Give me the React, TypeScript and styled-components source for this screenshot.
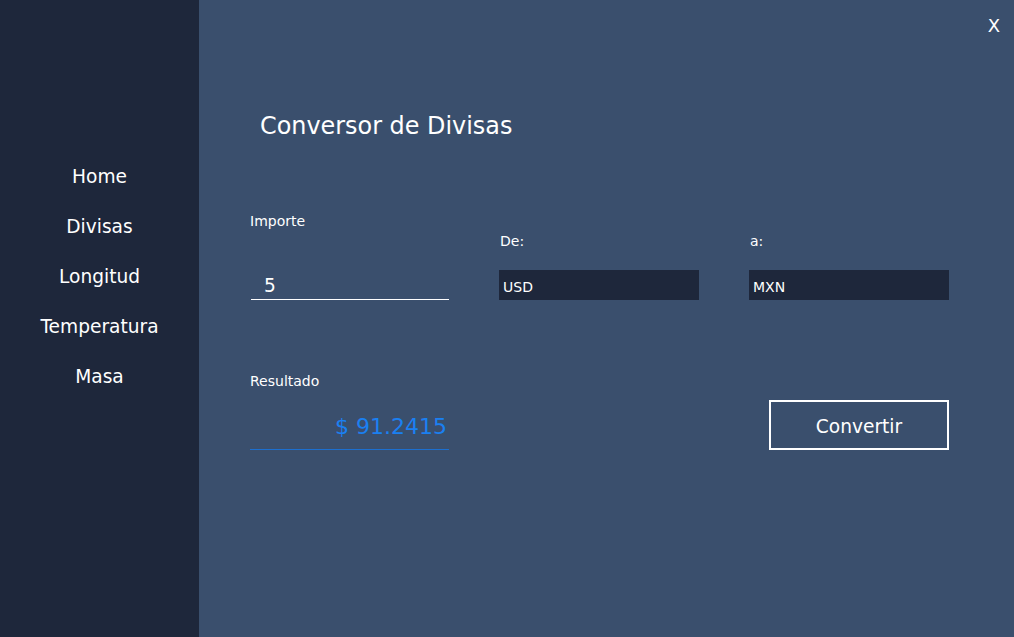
import React from "react";
import styled, { createGlobalStyle } from "styled-components";

const Global = createGlobalStyle`
  html, body { margin: 0; padding: 0; }
  body { font-family: "DejaVu Sans", Verdana, sans-serif; background: #3a4f6d; }
  * { box-sizing: border-box; }
`;

const Shell = styled.div`
  display: flex;
  width: 1014px;
  height: 637px;
  overflow: hidden;
`;

const Sidebar = styled.nav`
  width: 199px;
  flex: none;
  background: #1e273b;
  display: flex;
  flex-direction: column;
  align-items: center;
  padding-top: 164px;
  gap: 24px;
`;

const NavItem = styled.a`
  color: #ffffff;
  font-size: 18.6px;
  line-height: 26px;
  text-decoration: none;
  cursor: pointer;
`;

const Main = styled.main`
  flex: 1;
  background: #3a4f6d;
  display: flex;
  flex-direction: column;
  padding-left: 50px;
`;

const TopBar = styled.div`
  display: flex;
  justify-content: flex-end;
  padding: 15px 14px 0 0;
`;

const Close = styled.button`
  background: none;
  border: none;
  padding: 0;
  color: #ffffff;
  font-family: inherit;
  font-size: 18px;
  line-height: 22px;
  cursor: pointer;
`;

const Title = styled.h1`
  margin: 75px 0 0 11px;
  font-weight: normal;
  font-size: 23.9px;
  line-height: 28px;
  color: #ffffff;
`;

const FormGrid = styled.div`
  display: grid;
  grid-template-columns: 200px 200px 200px;
  column-gap: 50px;
  align-items: end;
  margin-top: 73px;
`;

const Field = styled.div<{ $gap: number }>`
  display: flex;
  flex-direction: column;
  gap: ${(p) => p.$gap}px;
`;

const Label = styled.label`
  color: #ffffff;
  font-size: 14px;
  line-height: 17px;
  padding-left: 1px;
`;

const AmountInput = styled.input`
  margin-left: 2px;
  width: 198px;
  height: 34px;
  background: transparent;
  border: none;
  border-bottom: 1px solid #ffffff;
  color: #ffffff;
  font-family: inherit;
  font-size: 18.6px;
  padding: 5px 0 0 13px;
  outline: none;
`;

const Select = styled.div`
  height: 30px;
  background: #1e273b;
  color: #ffffff;
  font-size: 14px;
  display: flex;
  align-items: center;
  padding: 4px 0 0 4px;
`;

const ResultGrid = styled.div`
  display: grid;
  grid-template-columns: 200px 200px 200px;
  column-gap: 50px;
  align-items: end;
  margin-top: 73px;
`;

const ResultValue = styled.div`
  margin-left: 1px;
  border-bottom: 1px solid #1c6fcf;
  color: #1a80f2;
  font-size: 22px;
  line-height: 26px;
  text-align: right;
  padding: 1px 2px 9px 0;
  margin-top: 7px;
`;

const ConvertButton = styled.button`
  grid-column: 3;
  justify-self: end;
  width: 180px;
  height: 50px;
  background: transparent;
  border: 2px solid #ffffff;
  color: #ffffff;
  font-family: inherit;
  font-size: 18.6px;
  padding: 2px 0 0 0;
  cursor: pointer;
`;

export default function App() {
  const nav = ["Home", "Divisas", "Longitud", "Temperatura", "Masa"];
  return (
    <>
      <Global />
      <Shell>
        <Sidebar>
          {nav.map((n) => (
            <NavItem key={n}>{n}</NavItem>
          ))}
        </Sidebar>
        <Main>
          <TopBar>
            <Close>X</Close>
          </TopBar>
          <Title>Conversor de Divisas</Title>
          <FormGrid>
            <Field $gap={36}>
              <Label>Importe</Label>
              <AmountInput defaultValue="5" />
            </Field>
            <Field $gap={20}>
              <Label>De:</Label>
              <Select>USD</Select>
            </Field>
            <Field $gap={20}>
              <Label>a:</Label>
              <Select>MXN</Select>
            </Field>
          </FormGrid>
          <ResultGrid>
            <Field $gap={16}>
              <Label>Resultado</Label>
              <ResultValue>$ 91.2415</ResultValue>
            </Field>
            <ConvertButton>Convertir</ConvertButton>
          </ResultGrid>
        </Main>
      </Shell>
    </>
  );
}
